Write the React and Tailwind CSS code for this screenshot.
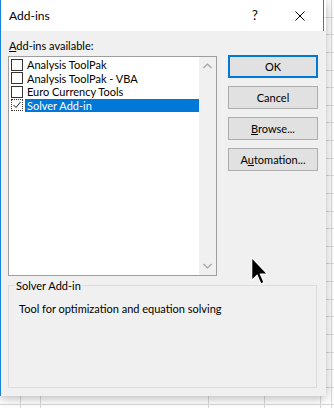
import React from 'react';

const items = [
  { name: 'Analysis ToolPak', checked: false },
  { name: 'Analysis ToolPak - VBA', checked: false },
  { name: 'Euro Currency Tools', checked: false },
  { name: 'Solver Add-in', checked: true, selected: true },
];

const Button = ({ children, primary }) => (
  <button
    className={
      'h-[23px] w-[90px] bg-[#e1e1e1] text-[11px] leading-none text-black ' +
      (primary ? 'border-2 border-[#0078d7]' : 'border border-[#adadad]')
    }
  >
    {children}
  </button>
);

const Checkbox = ({ checked, focused }) => (
  <div
    className={
      'flex h-[12px] w-[12px] shrink-0 items-center justify-center bg-white ' +
      (focused ? 'border border-dotted border-[#333]' : 'border border-[#333]')
    }
  >
    {checked && (
      <svg width="10" height="10" viewBox="0 0 10 10">
        <path d="M1.5 5 L4 7.5 L8.5 2" fill="none" stroke="#222" strokeWidth="1" />
      </svg>
    )}
  </div>
);

const Sheet = () => {
  const cols = ['w-[21px]', 'w-[20px]', 'w-[168px]', 'w-[56px]', 'w-[56px]', 'w-[11px]'];
  return (
    <div className="flex h-[408px] w-[334px] bg-white bg-[repeating-linear-gradient(to_bottom,transparent_0,transparent_16.63px,#d9d9d9_16.63px,#d9d9d9_17.63px)]">
      {cols.map((c, i) => (
        <div key={i} className={c + ' h-full border-r border-[#d9d9d9]'} />
      ))}
      <div className="flex-1" />
    </div>
  );
};

const Cursor = () => (
  <svg
    className="absolute left-[251px] top-[257px]"
    width="17"
    height="29"
    viewBox="0 0 12 20.5"
  >
    <path
      d="M0.5 0.5 L0.5 16.5 L4.3 12.8 L7 19 L9.2 18 L6.6 12 L11.5 12 Z"
      fill="#000"
      stroke="#fff"
      strokeWidth="0.8"
      strokeLinejoin="miter"
    />
  </svg>
);

export default function App() {
  return (
    <div className="relative h-[408px] w-[334px] overflow-hidden font-['Lato',sans-serif] text-black">
      <Sheet />

      {/* dialog window over the sheet */}
      <div className="absolute left-0 top-0 w-[326px] border-l border-[#1883d7] shadow-[0_2px_10px_rgba(0,0,0,0.3)]">
        <div className="flex h-[31px] w-[323px] items-center border-r border-[#1883d7] bg-white pl-[8px] text-[12px]">
          <span>Add-ins</span>
          <span className="ml-auto w-[10px] text-center text-[13px]">?</span>
          <div className="ml-[35px] mr-[18px] flex h-[10px] w-[10px] items-center justify-center">
            <svg width="10" height="10" viewBox="0 0 10 10">
              <path d="M0.5 0.5 L9.5 9.5 M9.5 0.5 L0.5 9.5" stroke="#000" strokeWidth="1" />
            </svg>
          </div>
        </div>

        <div className="h-[365px] w-[325px] bg-[#f0f0f0] px-[7px]">
          <div className="flex">
            <div className="flex w-[209px] flex-col">
              <div className="mt-[7px] h-[15px] pl-[1px] text-[11px] leading-[15px]">
                <span className="underline">A</span>dd-ins available:
              </div>
              <div className="mt-[3px] flex h-[220px] border border-[#9d9d9d] bg-white">
                <div className="flex flex-1 flex-col pt-[1px] pl-[2px] text-[11px]">
                  {items.map((it) => (
                    <div key={it.name} className="flex h-[13.5px] items-center">
                      <Checkbox checked={it.checked} focused={it.selected} />
                      <div
                        className={
                          'ml-[2px] flex h-full flex-1 items-center pl-[2px] leading-none ' +
                          (it.selected ? 'bg-[#0078d7] text-white' : '')
                        }
                      >
                        {it.name}
                      </div>
                    </div>
                  ))}
                </div>
                <div className="flex w-[17px] flex-col items-center justify-between bg-[#f0f0f0] py-[6px]">
                  <svg width="9" height="6" viewBox="0 0 9 6">
                    <path d="M0.5 5 L4.5 1 L8.5 5" fill="none" stroke="#a3a3a3" strokeWidth="1.2" />
                  </svg>
                  <svg width="9" height="6" viewBox="0 0 9 6">
                    <path d="M0.5 1 L4.5 5 L8.5 1" fill="none" stroke="#a3a3a3" strokeWidth="1.2" />
                  </svg>
                </div>
              </div>
            </div>

            <div className="ml-[11px] flex flex-col gap-[8px] pt-[24px]">
              <Button primary>OK</Button>
              <Button>Cancel</Button>
              <Button>
                <span className="underline">B</span>rowse...
              </Button>
              <Button>
                A<span className="underline">u</span>tomation...
              </Button>
            </div>
          </div>

          {/* group box */}
          <div className="relative mt-[9px] h-[103px] w-[309px] border border-[#dcdcdc] px-[10px]">
            <span className="absolute -top-[8px] left-[6px] bg-[#f0f0f0] px-[1px] text-[11px] leading-[15px]">
              Solver Add-in
            </span>
            <div className="mt-[15px] text-[11px] leading-[15px]">Tool for optimization and equation solving</div>
          </div>
        </div>
      </div>

      <Cursor />
    </div>
  );
}
